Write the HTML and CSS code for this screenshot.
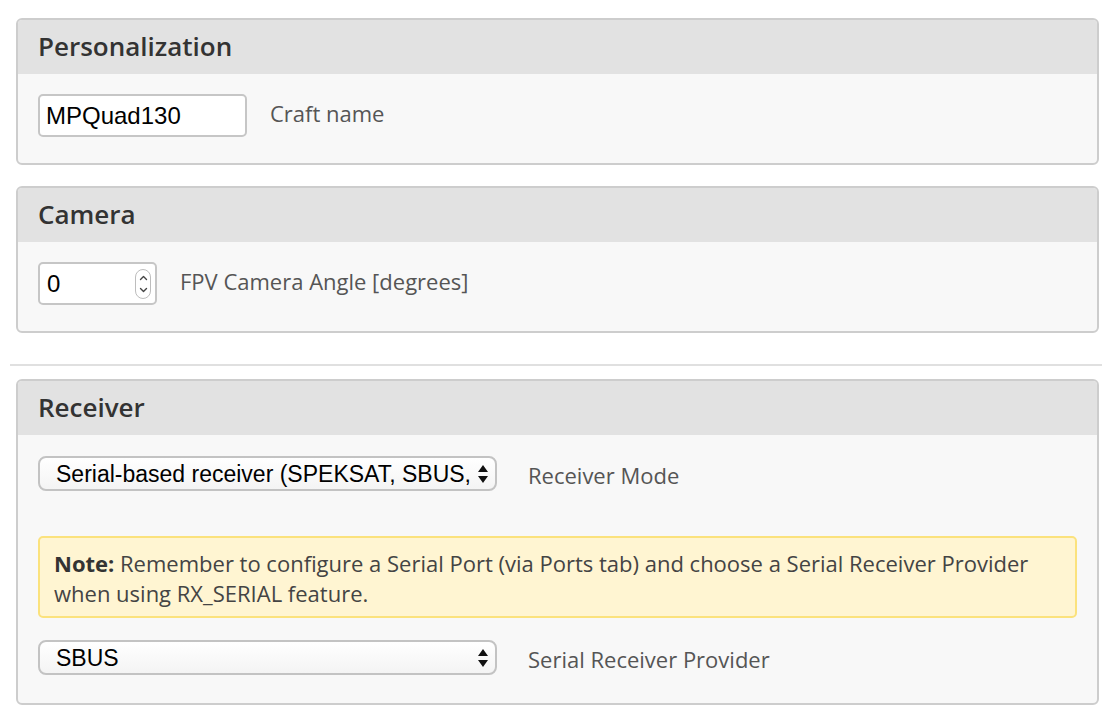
FILE: index.html
```html
<!DOCTYPE html>
<html>
<head>
<meta charset="utf-8">
<link rel="stylesheet" href="styles.css">
</head>
<body>
<div class="page">
  <section class="box">
    <div class="box-head">Personalization</div>
    <div class="box-body">
      <div class="row">
        <div class="text-input">MPQuad130</div>
        <span class="label">Craft name</span>
      </div>
    </div>
  </section>

  <section class="box">
    <div class="box-head">Camera</div>
    <div class="box-body">
      <div class="row">
        <div class="num-input">
          <span>0</span>
          <span class="spinner">
            <svg width="11" height="24" viewBox="0 0 11 24"><path d="M2.5 7.5 L5.5 4.5 L8.5 7.5 M2.5 16.5 L5.5 19.5 L8.5 16.5" fill="none" stroke="#444" stroke-width="1.4" stroke-linecap="round" stroke-linejoin="round"/></svg>
          </span>
        </div>
        <span class="label">FPV Camera Angle [degrees]</span>
      </div>
    </div>
  </section>

  <hr class="divider">

  <section class="box">
    <div class="box-head">Receiver</div>
    <div class="box-body receiver">
      <div class="row">
        <div class="select">
          <span class="select-text">Serial-based receiver (SPEKSAT, SBUS,</span>
          <svg class="arrows" width="12" height="20" viewBox="0 0 12 20"><path d="M6 1 L11 8 L1 8 Z M1 12 L11 12 L6 19 Z" fill="#111"/></svg>
        </div>
        <span class="label">Receiver Mode</span>
      </div>
      <div class="note"><b>Note:</b> Remember to configure a Serial Port (via Ports tab) and choose a Serial Receiver Provider when using RX_SERIAL feature.</div>
      <div class="row">
        <div class="select">
          <span class="select-text">SBUS</span>
          <svg class="arrows" width="12" height="20" viewBox="0 0 12 20"><path d="M6 1 L11 8 L1 8 Z M1 12 L11 12 L6 19 Z" fill="#111"/></svg>
        </div>
        <span class="label">Serial Receiver Provider</span>
      </div>
    </div>
  </section>
</div>
</body>
</html>
```
FILE: styles.css
```css
* { box-sizing: border-box; }
html, body { margin: 0; padding: 0; background: #fff; }
body { font-family: "Open Sans", "Liberation Sans", sans-serif; color: #555; }

.page {
  padding: 18px 9px 0 16px;
  display: flex;
  flex-direction: column;
  gap: 21px;
}

.box {
  border: 2px solid #cdcdcd;
  border-radius: 6px;
  background: #f8f8f8;
  overflow: hidden;
}

.box-head {
  height: 54px;
  background: #e2e2e2;
  padding: 0 20px 2px;
  display: flex;
  align-items: center;
  font-size: 26px;
  font-weight: 600;
  color: #333;
}

.box-body {
  padding: 20px 20px 26px;
}

.row {
  display: flex;
  align-items: center;
  gap: 23px;
}

.label {
  font-size: 22px;
  color: #555;
  margin-bottom: 5px;
}

.text-input {
  width: 209px;
  height: 43px;
  background: #fff;
  border: 2px solid #c6c6c6;
  border-radius: 5px;
  padding: 0 6px;
  display: flex;
  align-items: center;
  font-family: "Liberation Sans", Arial, sans-serif;
  font-size: 24px;
  color: #000;
}

.num-input {
  width: 119px;
  height: 43px;
  background: #fff;
  border: 2px solid #c6c6c6;
  border-radius: 5px;
  padding: 0 4px 0 7px;
  display: flex;
  align-items: center;
  justify-content: space-between;
  font-family: "Liberation Sans", Arial, sans-serif;
  font-size: 24px;
  color: #000;
}

.spinner {
  width: 16px;
  height: 30px;
  border: 1px solid #bdbdbd;
  border-radius: 8px;
  display: flex;
  align-items: center;
  justify-content: center;
  background: #fff;
}

.divider {
  margin: 10px -3px -8px -6px;
  border: 0;
  border-top: 2px solid #e0e0e0;
  height: 0;
}

.receiver {
  padding: 21px 20px 28px;
  display: flex;
  flex-direction: column;
  gap: 22px;
}

.receiver .row { gap: 31px; }

.receiver .label { margin: 3px 0 0; }

.select {
  width: 459px;
  height: 35px;
  border: 2px solid #c3c3c3;
  border-radius: 8px;
  background: linear-gradient(#ffffff, #f4f4f4);
  padding: 0 6px 0 16px;
  display: flex;
  align-items: center;
  justify-content: space-between;
  font-family: "Liberation Sans", Arial, sans-serif;
  font-size: 23px;
  color: #000;
}

.select-text { white-space: nowrap; overflow: hidden; padding-top: 2px; }

.arrows { flex: none; }

.note {
  margin-top: 23px;
  background: #fff5d2;
  border: 2px solid #fbe27d;
  border-radius: 5px;
  padding: 10px 14px 8px;
  font-size: 22px;
  line-height: 30px;
  color: #444;
}

.note b { font-weight: 700; color: #333; }
```
